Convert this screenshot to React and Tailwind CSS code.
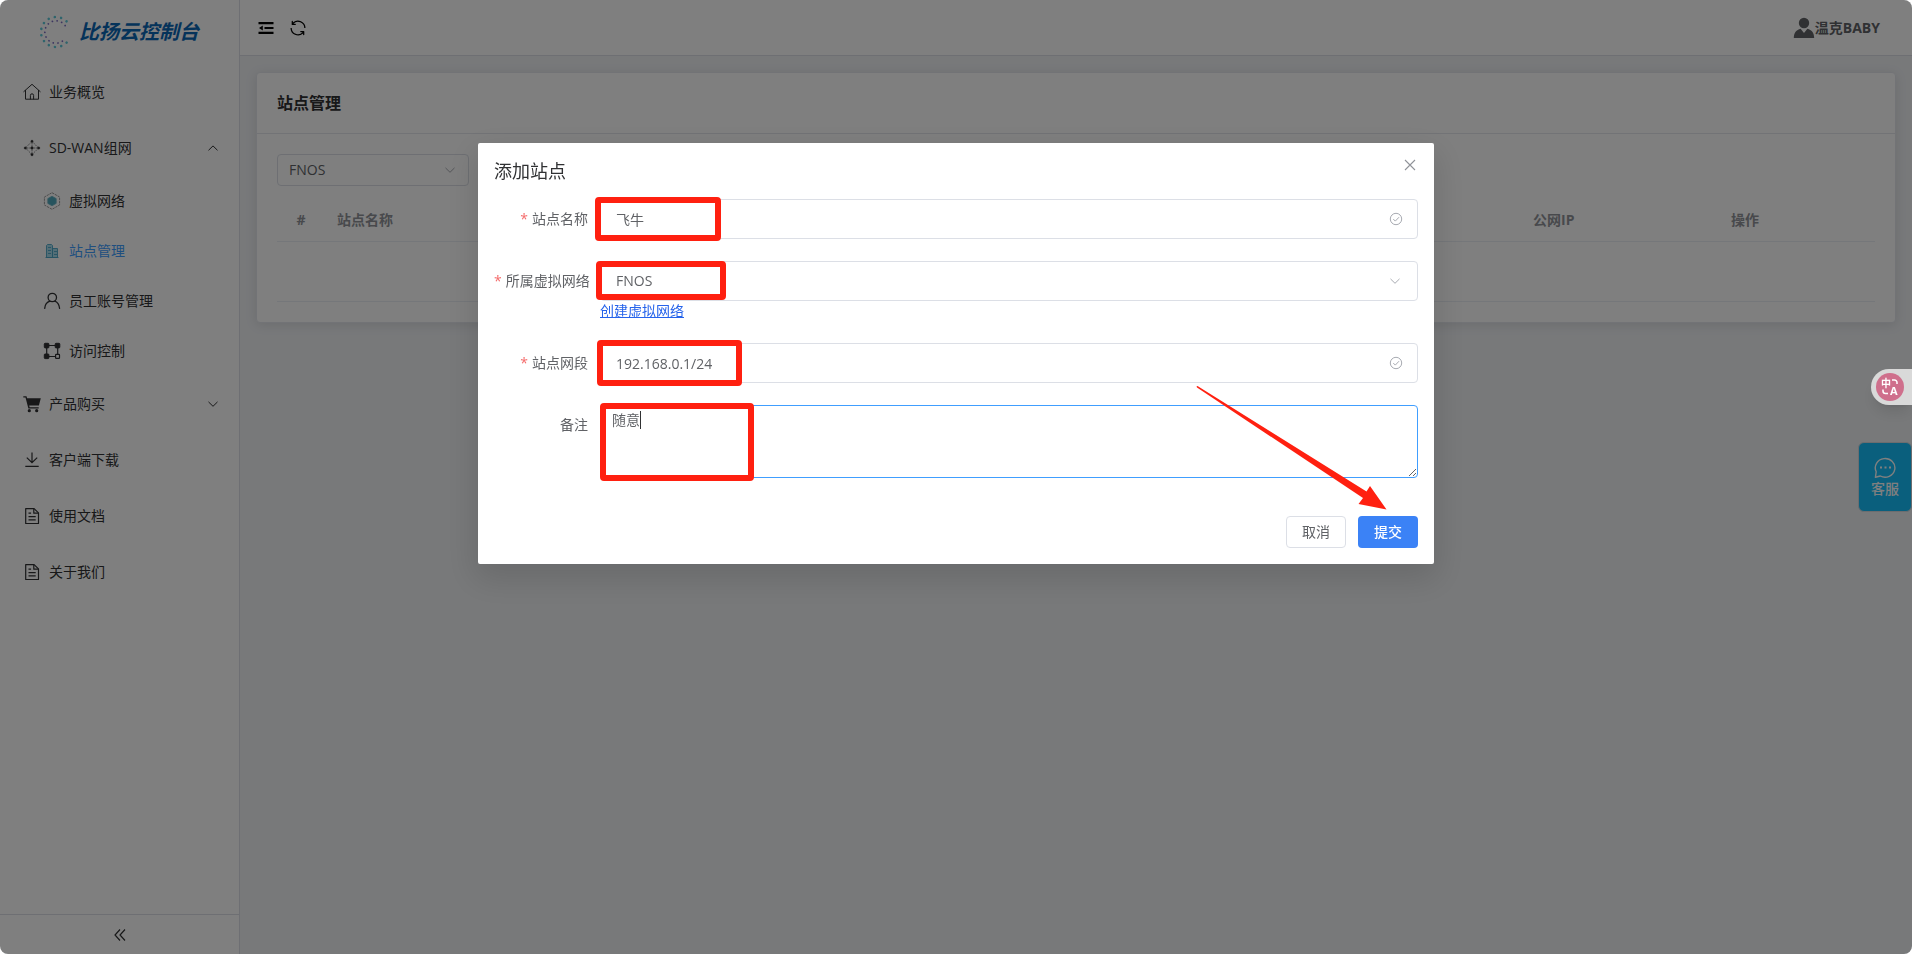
import React from 'react';

const HomeIcon = () => (
  <svg viewBox="0 0 18 18" className="size-[18px]" fill="none" stroke="currentColor" strokeWidth="1" strokeLinejoin="round" strokeLinecap="round">
    <path d="M.8 8.600 9 1.300l8.200 7.300M2.500 7.400v8.800h13V7.400" />
    <path d="M7.400 16v-3.600a1.600 1.600 0 0 1 3.200 0V16" />
  </svg>
);

const NetworkIcon = () => (
  <svg viewBox="0 0 18 18" className="size-[18px]" fill="currentColor" stroke="currentColor" strokeWidth=".6">
    <path d="M9 2.4 15.6 9 9 15.6 2.4 9zM9 2v14M2 9h14" fill="none" strokeWidth=".7" strokeDasharray="1.2 .6" opacity=".8" />
    <circle cx="9" cy="2.3" r="1.1" />
    <circle cx="9" cy="15.7" r="1.1" />
    <circle cx="2.3" cy="9" r="1.1" />
    <circle cx="15.7" cy="9" r="1.1" />
    <circle cx="9" cy="9" r="1.2" />
  </svg>
);

const HexIcon = () => (
  <svg viewBox="0 0 18 18" className="size-[18px]">
    <path d="M9 .7 16.6 5v8L9 17.3 1.4 13V5z" fill="none" stroke="#9a9a9a" strokeWidth="1" strokeDasharray="2.4 .8" />
    <path d="M9 4.2 13.2 6.6v4.8L9 13.8l-4.2-2.4V6.6z" fill="#4fa9bc" stroke="#6fb4c4" strokeWidth=".8" />
  </svg>
);

const BuildingIcon = () => (
  <svg viewBox="0 0 18 18" className="size-[18px]" fill="#a9dcec" stroke="#4ba5c6" strokeWidth=".9">
    <path d="M3.500 15.500v-12l1-1h4l1 1v12zM9.500 6.500h5v9h-5z" />
    <path d="M2.500 15.500h13M5 5.500h3M5 8.500h3M5 11.500h3M11 9.500h3M11 12.500h3" />
  </svg>
);

const PersonIcon = () => (
  <svg viewBox="0 0 18 18" className="size-[18px]" fill="none" stroke="currentColor" strokeWidth="1.300" strokeLinecap="round">
    <circle cx="9.300" cy="5.500" r="4.200" />
    <path d="M1.700 16.400C2 12.600 4.300 10 7 9.200M11.600 9.200c2.700.8 4.600 3.400 5 7.200" />
  </svg>
);

const AccessIcon = () => (
  <svg viewBox="0 0 18 18" className="size-[18px]" fill="currentColor" stroke="currentColor">
    <path d="M3.700 3.500h11v11h-11z" fill="none" strokeWidth="1.200" />
    <rect x="1.300" y="1.300" width="4.600" height="4.600" rx=".8" />
    <rect x="12.200" y="1.300" width="4.600" height="4.600" rx=".8" />
    <rect x="1.300" y="12" width="4.600" height="4.600" rx=".8" />
    <rect x="12.600" y="12.400" width="3.900" height="3.900" rx=".6" fill="#fff" strokeWidth="1.200" />
  </svg>
);

const CartIcon = () => (
  <svg viewBox="0 0 18 18" className="size-[18px]" fill="currentColor">
    <path d="M.3 1.200h3.200l.6 2h13.700l-1.900 7.300H6.200l.4 1.700h9.100v1.300H5.400L2.500 2.600H.3z" />
    <circle cx="6.300" cy="15.700" r="1.600" />
    <circle cx="13.700" cy="15.700" r="1.600" />
  </svg>
);

const DownloadIcon = () => (
  <svg viewBox="0 0 18 18" className="size-[18px]" fill="none" stroke="currentColor" strokeWidth="1.200">
    <path d="M9 1.500v10M3.800 6.600 9 11.600l5.200-5M2.300 15.300h13.400" />
  </svg>
);

const DocIcon = () => (
  <svg viewBox="0 0 18 18" className="size-[18px]" fill="none" stroke="currentColor" strokeWidth="1.200" strokeLinejoin="round">
    <path d="M2.700 1.600h8.400l4.400 4.300v10.600H2.700z" />
    <path d="M10.800 1.800v4.400h4.500M5.500 6.200h2.600M5.500 9.700h7.200M5.500 12.900h7.200" />
  </svg>
);

const Chevron = ({ up, className }) => (
  <svg viewBox="0 0 12 12" className={className} fill="none" stroke="currentColor" strokeWidth="1" aria-hidden="true">
    <path d={up ? 'M1.500 8.300 6 3.900l4.500 4.400' : 'M1.500 3.900 6 8.300l4.500-4.400'} />
  </svg>
);

const CheckCircle = () => (
  <svg viewBox="0 0 14 14" className="absolute right-[15px] top-[13px] size-[14px] text-[#a8abb2]" fill="none" stroke="currentColor" strokeWidth="1">
    <circle cx="7" cy="7" r="5.700" />
    <path d="m4.300 7.100 2 2 3.700-3.900" />
  </svg>
);

const LOGO_DOTS = Array.from({ length: 12 }, (_, i) => 45 + i * 24.5);

const Logo = () => (
  <svg viewBox="-17 -17 34 34" className="size-[34px]" aria-hidden="true">
    {LOGO_DOTS.map((deg) => (
      <g key={deg} transform={`rotate(${deg})`}>
        <circle cx="15" cy="0" r="1.300" fill="#5ec8d8" />
        <circle cx="11" cy="2" r=".9" fill="#7a6cc0" />
      </g>
    ))}
  </svg>
);

const MENU = [
  { label: '业务概览', icon: HomeIcon },
  {
    label: 'SD-WAN组网',
    icon: NetworkIcon,
    open: true,
    children: [
      { label: '虚拟网络', icon: HexIcon },
      { label: '站点管理', icon: BuildingIcon, active: true },
      { label: '员工账号管理', icon: PersonIcon },
      { label: '访问控制', icon: AccessIcon },
    ],
  },
  { label: '产品购买', icon: CartIcon, more: true },
  { label: '客户端下载', icon: DownloadIcon },
  { label: '使用文档', icon: DocIcon },
  { label: '关于我们', icon: DocIcon },
];

const Sidebar = () => (
  <aside className="flex w-60 shrink-0 flex-col border-r border-[#dcdfe6] bg-white">
    <div className="flex h-16 items-center gap-1.5 pl-[39px]">
      <Logo />
      <span className="text-xl font-bold italic text-[#0a66b4]">比扬云控制台</span>
    </div>
    <nav className="flex-1">
      <ul>
        {MENU.map(({ label, icon: Icon, open, more, children }) => (
          <li key={label}>
            <a href="#" className="flex h-14 items-center gap-2 px-[23px] text-[#303133]">
              <Icon />
              <span className="flex-1">{label}</span>
              {(open || more) && <Chevron up={open} className="mr-[-3px] size-3" />}
            </a>
            {children && (
              <ul>
                {children.map(({ label: text, icon: SubIcon, active }) => (
                  <li key={text}>
                    <a href="#" className={`flex h-[50px] items-center gap-2 pl-[43px] ${active ? 'text-[#409eff]' : 'text-[#303133]'}`}>
                      <SubIcon />
                      {text}
                    </a>
                  </li>
                ))}
              </ul>
            )}
          </li>
        ))}
      </ul>
    </nav>
    <button type="button" aria-label="收起" className="flex h-10 items-center justify-center border-t border-[#dcdfe6] text-[#303133]">
      <svg viewBox="0 0 14 14" className="size-[14px]" fill="none" stroke="currentColor" strokeWidth="1.200">
        <path d="M7 1.500 2 7l5 5.500M12 1.500 7 7l5 5.500" />
      </svg>
    </button>
  </aside>
);

const Header = () => (
  <header className="flex h-14 items-center justify-between border-b border-[#dcdfe6] bg-white pl-[18px] pr-8">
    <div className="flex items-center gap-3.5 text-black">
      <button type="button" aria-label="折叠菜单">
        <svg viewBox="0 0 16 16" className="size-4" fill="currentColor">
          <path d="M.5 2h15v2.200H.5zM6.500 6.900h9v2.200h-9zM.5 11.800h15V14H.5zM4.800 5.600v4.800L1 8z" />
        </svg>
      </button>
      <button type="button" aria-label="刷新">
        <svg viewBox="0 0 1024 1024" className="size-5" fill="currentColor">
          <path d="M771.776 794.88A384 384 0 0 1 128 512h64a320 320 0 0 0 555.712 216.448H654.72a32 32 0 1 1 0-64h149.056a32 32 0 0 1 32 32v148.928a32 32 0 1 1-64 0v-50.56zM276.288 295.616h92.992a32 32 0 0 1 0 64H220.16a32 32 0 0 1-32-32V178.56a32 32 0 0 1 64 0v50.56A384 384 0 0 1 896.128 512h-64a320 320 0 0 0-555.776-216.384z" />
        </svg>
      </button>
    </div>
    <div className="flex items-center font-bold text-[#606266]">
      <svg viewBox="0 0 22 22" className="size-[22px]" fill="currentColor">
        <circle cx="11" cy="6" r="5.200" />
        <path d="M.8 21c0-5 2.600-8.200 6.800-9.200L11 16l3.400-4.200c4.200 1 6.800 4.200 6.800 9.200z" />
      </svg>
      温克BABY
    </div>
  </header>
);

const SitePage = () => (
  <section className="m-4 rounded border border-[#e4e7ed] bg-white shadow-[0_2px_12px_rgba(0,0,0,0.1)]">
    <h1 className="border-b border-[#e4e7ed] px-5 py-[18px] text-base leading-6 font-bold text-[#303133]">站点管理</h1>
    <div className="p-5">
      <div className="relative w-48">
        <select aria-label="虚拟网络" className="h-8 w-full appearance-none rounded border border-[#dcdfe6] bg-white px-[11px] text-[#606266]">
          <option>FNOS</option>
        </select>
        <Chevron className="absolute right-[13px] top-[10px] size-3 text-[#a8abb2]" />
      </div>
      <table className="mt-[14px] w-full table-fixed text-left text-[#909399]">
        <thead>
          <tr className="h-[41px] border-b border-[#ebeef5]">
            <th className="w-12 text-center">#</th>
            <th className="px-3">站点名称</th>
            <th className="w-[198px] px-3">公网IP</th>
            <th className="w-[156px] px-3">操作</th>
          </tr>
        </thead>
        <tbody>
          <tr className="h-[60px] border-b border-[#ebeef5]">
            <td colSpan={4} />
          </tr>
        </tbody>
      </table>
    </div>
  </section>
);

const FormRow = ({ id, label, required, children }) => (
  <div className="mb-[22px] flex">
    <label htmlFor={id} className="w-[106px] shrink-0 pr-3 text-right leading-10 whitespace-nowrap text-[#606266]">
      {required && <span className="mr-1 text-[#f56c6c]">*</span>}
      {label}
    </label>
    <div className="relative flex-1">{children}</div>
  </div>
);

const field = 'block w-full rounded border border-[#dcdfe6] bg-white text-[#606266] outline-none';
const mark = 'pointer-events-none absolute rounded border-[6px] border-[#ff2010]';

const AddSiteDialog = () => (
  <div role="dialog" aria-labelledby="dialog-title" className="relative mt-[15vh] w-1/2 rounded-xs bg-white p-4 shadow-[0_12px_32px_4px_rgba(0,0,0,0.12)]">
    <header className="mb-4 flex h-6 items-center justify-between">
      <h2 id="dialog-title" className="text-lg leading-6 text-[#303133]">添加站点</h2>
      <button type="button" aria-label="关闭" className="mb-3 mr-0.5 text-[#909399]">
        <svg viewBox="0 0 12 12" className="size-3" fill="none" stroke="currentColor" strokeWidth="1.100">
          <path d="m1 1 10 10M11 1 1 11" />
        </svg>
      </button>
    </header>
    <form>
      <FormRow id="name" label="站点名称" required>
        <input id="name" defaultValue="飞牛" className={`${field} h-10 px-[15px]`} />
        <CheckCircle />
        <div className={`${mark} -top-0.5 -left-[5px] h-11 w-[126px]`} />
      </FormRow>
      <FormRow id="network" label="所属虚拟网络" required>
        <select id="network" className={`${field} h-10 appearance-none px-[15px]`}>
          <option>FNOS</option>
        </select>
        <Chevron className="absolute right-[17px] top-[14px] size-3 text-[#a8abb2]" />
        <div className={`${mark} top-0 -left-1 h-[39px] w-[130px]`} />
        <a href="#" className="block w-fit leading-5 text-[#2563eb] underline">创建虚拟网络</a>
      </FormRow>
      <FormRow id="segment" label="站点网段" required>
        <input id="segment" defaultValue="192.168.0.1/24" className={`${field} h-10 px-[15px]`} />
        <CheckCircle />
        <div className={`${mark} -top-[3px] -left-[3px] h-[46px] w-[145px]`} />
      </FormRow>
      <FormRow id="remark" label="备注">
        <textarea id="remark" defaultValue="随意" className="block h-[73px] w-full resize-y rounded border border-[#409eff] bg-white px-[11px] py-1 leading-5 text-[#606266] outline-none" />
        <span className="absolute left-10 top-1.5 h-[18px] w-px bg-[#303133]" />
        <div className={`${mark} -top-0.5 left-0 h-[78px] w-[154px]`} />
      </FormRow>
    </form>
    <footer className="flex justify-end gap-3 pt-4">
      <button type="button" className="h-8 rounded border border-[#dcdfe6] bg-white px-[15px] text-[#606266]">取消</button>
      <button type="submit" className="h-8 rounded bg-[#3b82f6] px-4 font-medium text-white">提交</button>
    </footer>
    <svg viewBox="0 0 200 140" className="pointer-events-none absolute right-11 bottom-11 h-[140px] w-[200px]" fill="#ff2010">
      <path d="M6.500 6.500 7.500 6 176.500 111.500 180 106 196.500 129.500 168.500 124 173 118 7 7.500z" />
    </svg>
  </div>
);

const App = () => {
  return (
    <div className="relative flex min-h-screen overflow-hidden rounded-lg bg-[#f0f2f5] font-['Open_Sans','Noto_Sans_CJK_SC',sans-serif] text-sm">
      <Sidebar />
      <main className="min-w-0 flex-1">
        <Header />
        <SitePage />
      </main>
      <button type="button" className="absolute right-0 top-[442px] flex h-[70px] w-[54px] flex-col items-center justify-center rounded-md border border-[#d8dade] bg-[#14bffa] pt-0.5 font-medium text-white">
        <svg viewBox="0 0 22 22" className="size-[22px]" fill="none" stroke="currentColor" strokeWidth="1.400">
          <path d="M1.400 20.300 2.200 14.800A9.800 9.300 0 1 1 6.300 19z" strokeLinejoin="round" />
          <path d="M6 10.500h2M10.500 10.500h2M15 10.500h2" strokeWidth="2" />
        </svg>
        客服
      </button>

      <div className="fixed inset-0 flex items-start justify-center rounded-lg bg-black/50">
        <AddSiteDialog />
      </div>

      <button type="button" aria-label="翻译" className="fixed right-0 top-[369px] flex h-9 w-[41px] items-center rounded-l-full bg-[#d9d9d9] pl-[5px] shadow-lg">
        <svg viewBox="0 0 28 28" className="size-7">
          <circle cx="14" cy="14" r="14" fill="#cf6f8c" />
          <g fill="#fff" fontWeight="700">
            <text x="5" y="14" fontSize="10">中</text>
            <text x="14" y="21.500" fontSize="11">A</text>
          </g>
          <path d="M16 7h2.500a2.500 2.500 0 0 1 2.500 2.500V11M7 16.500v1.500a2.500 2.500 0 0 0 2.500 2.500H12" fill="none" stroke="#fff" strokeWidth="1.500" />
        </svg>
      </button>
    </div>
  );
};

export default App;
